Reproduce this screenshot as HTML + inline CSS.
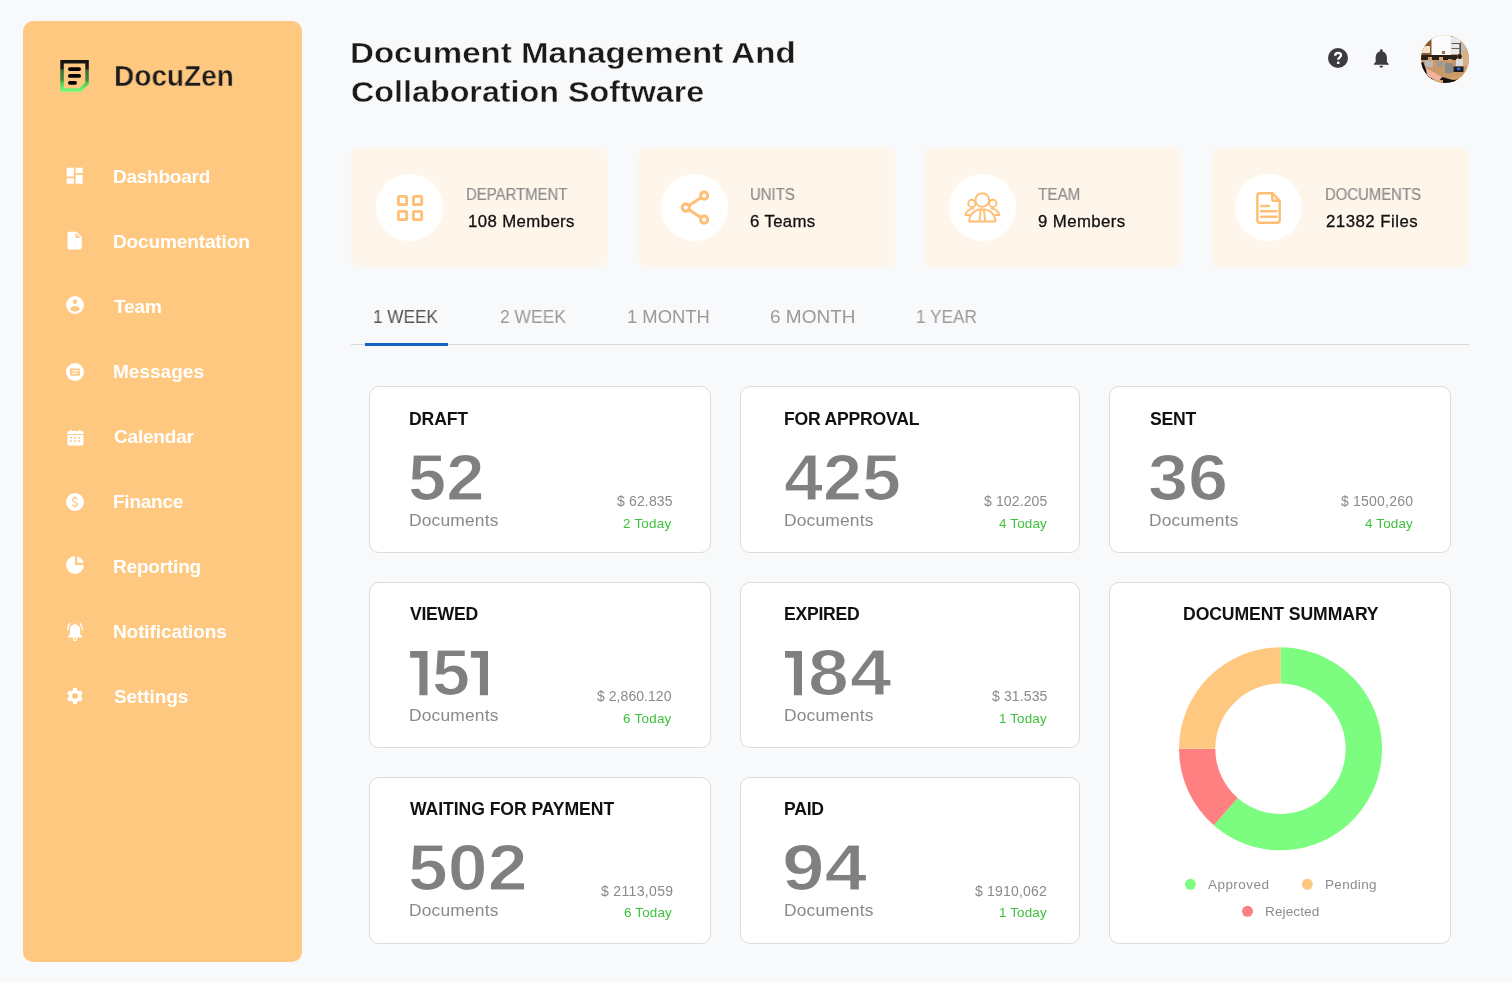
<!DOCTYPE html>
<html><head><meta charset="utf-8"><style>
*{margin:0;padding:0;box-sizing:border-box}
html,body{width:1512px;height:982px;overflow:hidden;background:#F8F9FB;font-family:"Liberation Sans",sans-serif}
.t{position:absolute;line-height:1;white-space:nowrap;will-change:transform}
.ic{position:absolute;overflow:visible;will-change:transform}
.b{position:absolute}
</style></head><body>
<div class="b" style="left:23px;top:21px;width:279px;height:941px;background:#FEC880;border-radius:10px"></div>
<div class="b" style="left:351px;top:148px;width:257px;height:119px;background:#FFF6EB;border-radius:8px"></div>
<div class="b" style="left:375.8px;top:174px;width:67px;height:67px;background:#fff;border-radius:50%"></div>
<div class="b" style="left:638px;top:148px;width:257px;height:119px;background:#FFF6EB;border-radius:8px"></div>
<div class="b" style="left:661.0px;top:174px;width:67px;height:67px;background:#fff;border-radius:50%"></div>
<div class="b" style="left:925px;top:148px;width:257px;height:119px;background:#FFF6EB;border-radius:8px"></div>
<div class="b" style="left:949.0px;top:174px;width:67px;height:67px;background:#fff;border-radius:50%"></div>
<div class="b" style="left:1212px;top:148px;width:257px;height:119px;background:#FFF6EB;border-radius:8px"></div>
<div class="b" style="left:1234.8px;top:174px;width:67px;height:67px;background:#fff;border-radius:50%"></div>
<div class="b" style="left:351px;top:344px;width:1118px;height:1px;background:#d9d9d9"></div>
<div class="b" style="left:365px;top:343px;width:83px;height:3px;background:#1565c0"></div>
<div class="b" style="left:369px;top:386px;width:342px;height:167px;background:#fff;border:1px solid #dcdcdc;border-radius:10px"></div>
<div class="b" style="left:740px;top:386px;width:340px;height:167px;background:#fff;border:1px solid #dcdcdc;border-radius:10px"></div>
<div class="b" style="left:1109px;top:386px;width:342px;height:167px;background:#fff;border:1px solid #dcdcdc;border-radius:10px"></div>
<div class="b" style="left:369px;top:582px;width:342px;height:166px;background:#fff;border:1px solid #dcdcdc;border-radius:10px"></div>
<div class="b" style="left:740px;top:582px;width:340px;height:166px;background:#fff;border:1px solid #dcdcdc;border-radius:10px"></div>
<div class="b" style="left:369px;top:777px;width:342px;height:167px;background:#fff;border:1px solid #dcdcdc;border-radius:10px"></div>
<div class="b" style="left:740px;top:777px;width:340px;height:167px;background:#fff;border:1px solid #dcdcdc;border-radius:10px"></div>
<div class="b" style="left:1109px;top:582px;width:342px;height:362px;background:#fff;border:1px solid #dcdcdc;border-radius:10px"></div>
<svg class="ic" style="left:0;top:0;width:1512px;height:982px" viewBox="0 0 1512 982"><path fill="#7DFD7F" d="M1280.50 647.30A101.5 101.5 0 1 1 1213.78 825.29L1237.64 797.93A65.2 65.2 0 1 0 1280.50 683.60z"/><path fill="#FF8080" d="M1213.78 825.29A101.5 101.5 0 0 1 1179.00 748.80L1215.30 748.80A65.2 65.2 0 0 0 1237.64 797.93z"/><path fill="#FFC880" d="M1179.00 748.80A101.5 101.5 0 0 1 1280.50 647.30L1280.50 683.60A65.2 65.2 0 0 0 1215.30 748.80z"/><circle cx="1190.4" cy="884.3" r="5.5" fill="#7DFD7F"/><circle cx="1307.3" cy="884.3" r="5.5" fill="#FFC880"/><circle cx="1247.5" cy="911.3" r="5.5" fill="#FF8080"/></svg>
<svg class="ic" style="left:59px;top:59px;width:32px;height:34px" viewBox="0 0 32 34"><defs><linearGradient id="lg" gradientUnits="userSpaceOnUse" x1="0" y1="0.9" x2="0" y2="32.7"><stop offset="0" stop-color="#111"/><stop offset=".27" stop-color="#1c1c1c"/><stop offset=".33" stop-color="#3a6e3e"/><stop offset=".64" stop-color="#3f8a42"/><stop offset=".72" stop-color="#4ccc4e"/><stop offset=".86" stop-color="#66e468"/><stop offset="1" stop-color="#7dfd7f"/></linearGradient></defs>
<path d="M3.05 2.65h25v21.6l-6.6 6.7H3.05z" fill="none" stroke="url(#lg)" stroke-width="3.5"/>
<rect x="9" y="8.2" width="13" height="3.7" rx="1.85" fill="#050505"/><rect x="9" y="15.1" width="13" height="3.7" rx="1.85" fill="#050505"/><rect x="9" y="22" width="9" height="3.7" rx="1.85" fill="#050505"/></svg>
<svg class="ic" style="left:1421px;top:35px;width:48px;height:48px" viewBox="0 0 48 48"><defs><clipPath id="av"><circle cx="24" cy="24" r="24"/></clipPath></defs><g clip-path="url(#av)">
<rect width="48" height="48" fill="#c99a68"/>
<rect x="0" y="0" width="12" height="22" fill="#8a5a30"/>
<rect x="0" y="11" width="9" height="7" fill="#f3e2cc"/>
<rect x="10.5" y="0" width="19.5" height="20" fill="#fbfbfb"/>
<rect x="29.5" y="2" width="10" height="17" fill="#e9e9e9"/>
<rect x="30.5" y="8" width="8" height="1" fill="#555"/><rect x="30.5" y="13" width="8" height="1" fill="#666"/>
<rect x="39" y="5" width="9" height="26" fill="#d6b089"/>
<rect x="40" y="10" width="4" height="6" fill="#bbb"/>
<rect x="38.5" y="8" width="1.2" height="20" fill="#222"/>
<rect x="21" y="16" width="3" height="3" fill="#a0703e"/>
<path d="M0 20h36v5H0z" fill="#2a2018"/>
<circle cx="38.5" cy="21.5" r="2.3" fill="#1f1a18"/>
<rect x="35" y="24" width="7" height="7" fill="#dcdcdc"/>
<rect x="4" y="25" width="8" height="7" fill="#b8b8b8"/>
<rect x="16" y="26" width="6" height="6" fill="#9a9a9a"/>
<rect x="24" y="28" width="8" height="10" fill="#8a8a8a"/>
<rect x="7" y="22" width="4" height="4" fill="#d9a070"/><rect x="18" y="22" width="4" height="4" fill="#e0a878"/><rect x="27" y="24" width="4" height="4" fill="#d59b6a"/>
<path d="M0 27 Q8 36 22 44 L48 38 V48 H0z" fill="#cf9f6c"/>
<path d="M1 27.5 Q4 37 8 42 Q14 44 22 43.5 Q30 46 38 48" stroke="#141010" stroke-width="2.6" fill="none"/>
<path d="M0 30 L0 48 L8 48 Q3 40 1 30z" fill="#141010"/>
<path d="M5 33 Q12 37 21 42 L18 46 Q10 44 6 40z" fill="#f0b49c"/>
<path d="M22 44 Q30 46 40 44 L42 48 L22 48z" fill="#161210"/>
<rect x="32.5" y="31.5" width="10" height="5.5" fill="#1e1e22"/>
<rect x="36" y="32.5" width="3.3" height="2.6" fill="#2f6fd8"/>
</g></svg>
<svg class="ic" style="left:0;top:0;width:1512px;height:982px" viewBox="0 0 1512 982"><path fill="#808080" d="M410.1 651.1H427.5V695.2H419.4V657.8000000000001H410.1z"/></svg>
<svg class="ic" style="left:0;top:0;width:1512px;height:982px" viewBox="0 0 1512 982"><path fill="#808080" d="M470.9 651.1H488.0V695.2H479.9V657.8000000000001H470.9z"/></svg>
<svg class="ic" style="left:0;top:0;width:1512px;height:982px" viewBox="0 0 1512 982"><path fill="#808080" d="M785.0 651.1H802.0V695.2H793.9V657.8000000000001H785.0z"/></svg>
<svg class="ic" style="left:64.3px;top:165.3px;width:21.336px;height:21.336px;" viewBox="0 0 24 24"><path fill="#ffffff" d="M3 13h8V3H3v10zm0 8h8v-6H3v6zm10 0h8V11h-8v10zm0-18v6h8V3h-8z"/></svg>
<svg class="ic" style="left:64.3px;top:230.3px;width:21.336px;height:21.336px;" viewBox="0 0 24 24"><path fill="#ffffff" d="M6 2c-1.1 0-1.99.9-1.99 2L4 20c0 1.1.89 2 1.99 2H18c1.1 0 2-.9 2-2V8l-6-6H6zm7 7V3.5L18.5 9H13z"/></svg>
<svg class="ic" style="left:65px;top:295px;width:20px;height:20px;" viewBox="1 1 18 18"><path fill="#ffffff" fill-rule="evenodd" d="M18 10a8 8 0 11-16 0 8 8 0 0116 0zm-6-3a2 2 0 11-4 0 2 2 0 014 0zm-2 4a5 5 0 00-4.546 2.916A5.986 5.986 0 0010 16a5.986 5.986 0 004.546-2.084A5 5 0 0010 11z"/></svg>
<svg class="ic" style="left:66px;top:363px;width:18px;height:18px;" viewBox="0 0 18 18"><circle cx="9" cy="9" r="9" fill="#ffffff"/><path d="M3.6 5.4h10.2v6.4c0 .6-.4 1-1 1H5.3c-.6 0-1-.4-1-1z" fill="#FEC880"/><rect x="6" y="7" width="7" height="1" fill="#ffffff" opacity=".8"/><rect x="6" y="8.6" width="6" height="1" fill="#ffffff" opacity=".6"/><rect x="6" y="10.2" width="5" height="1" fill="#ffffff" opacity=".8"/></svg>
<svg class="ic" style="left:66.5px;top:428.5px;width:17px;height:17px;" viewBox="0 0 17 17"><rect x="0.5" y="2" width="16" height="14.5" rx="1.6" fill="#ffffff"/><rect x="3.5" y="0.5" width="1.6" height="3" rx=".6" fill="#ffffff"/><rect x="11.9" y="0.5" width="1.6" height="3" rx=".6" fill="#ffffff"/><rect x="0.5" y="5" width="16" height="0.9" fill="#FEC880"/><rect x="3.0" y="8.0" width="1.9" height="1.6" fill="#FEC880"/><rect x="3.0" y="11.2" width="1.9" height="1.6" fill="#FEC880"/><rect x="7.1" y="8.0" width="1.9" height="1.6" fill="#FEC880"/><rect x="7.1" y="11.2" width="1.9" height="1.6" fill="#FEC880"/><rect x="11.2" y="8.0" width="1.9" height="1.6" fill="#FEC880"/><rect x="11.2" y="11.2" width="1.9" height="1.6" fill="#FEC880"/></svg>
<svg class="ic" style="left:66px;top:493px;width:18px;height:18px;" viewBox="0 0 18 18"><circle cx="9" cy="9" r="9" fill="#ffffff"/><path d="M11.1 6.3C10.6 5.4 9.8 5 8.9 5 7.5 5 6.6 5.8 6.6 6.9c0 2.3 4.7 1.5 4.7 4.1 0 1.2-1 2-2.4 2-1.2 0-2.1-.6-2.5-1.5M8.9 3.2v1.8M8.9 13v1.8" fill="none" stroke="#FEC880" stroke-width="1.35"/></svg>
<svg class="ic" style="left:65px;top:555px;width:20px;height:20px;" viewBox="1 1 18 18"><path fill="#ffffff" d="M2 10a8 8 0 018-8v8h8a8 8 0 11-16 0z"/><path fill="#ffffff" d="M12 2.252A8.014 8.014 0 0117.748 8H12V2.252z"/></svg>
<svg class="ic" style="left:66px;top:622px;width:18px;height:20px;" viewBox="0 0 18 20"><path fill="#ffffff" d="M9 1.7c.6 0 1 .4 1 .9 2.6.5 4.2 2.6 4.2 5.4v4.3l1.8 2.2v.9H2v-.9l1.8-2.2V8c0-2.8 1.6-4.9 4.2-5.4 0-.5.4-.9 1-.9z"/><circle cx="9" cy="17.2" r="1.55" fill="none" stroke="#ffffff" stroke-width="1.2"/><path d="M1.7 7.6C1.8 5 2.6 3 3.9 1.5M16.3 7.6C16.2 5 15.4 3 14.1 1.5" stroke="#ffffff" stroke-width="1.35" fill="none" stroke-linecap="round"/></svg>
<svg class="ic" style="left:65px;top:686px;width:20px;height:20px;" viewBox="0 0 24 24"><path fill="#ffffff" fill-rule="evenodd" d="M19.14 12.94c.04-.3.06-.61.06-.94 0-.32-.02-.64-.07-.94l2.03-1.58a.49.49 0 00.12-.61l-1.92-3.32a.488.488 0 00-.59-.22l-2.39.96c-.5-.38-1.03-.7-1.62-.94l-.36-2.54a.484.484 0 00-.48-.41h-3.84c-.24 0-.43.17-.47.41l-.36 2.54c-.59.24-1.13.57-1.62.94l-2.39-.96c-.22-.08-.47 0-.59.22L2.74 8.87c-.12.21-.08.47.12.61l2.03 1.58c-.05.3-.09.63-.09.94s.02.64.07.94l-2.03 1.58a.49.49 0 00-.12.61l1.92 3.32c.12.22.37.29.59.22l2.39-.96c.5.38 1.03.7 1.62.94l.36 2.54c.05.24.24.41.48.41h3.84c.24 0 .44-.17.47-.41l.36-2.54c.59-.24 1.13-.56 1.62-.94l2.39.96c.22.08.47 0 .59-.22l1.92-3.32c.12-.22.07-.47-.12-.61l-2.01-1.58zM12 15.6c-1.98 0-3.6-1.62-3.6-3.6s1.62-3.6 3.6-3.6 3.6 1.62 3.6 3.6-1.62 3.6-3.6 3.6z"/></svg>
<svg class="ic" style="left:1328px;top:48px;width:20px;height:20px;" viewBox="2 2 20 20"><circle cx="12" cy="12" r="10" fill="#3b3b40"/><path d="M9.15 9.7C9.15 7.8 10.4 6.95 12.1 6.95 13.8 6.95 15 7.9 15 9.3c0 2-2.75 2.1-2.75 4.4" fill="none" stroke="#fff" stroke-width="2.3"/><rect x="10.95" y="15.6" width="2.6" height="2.5" rx=".9" fill="#fff"/></svg>
<svg class="ic" style="left:1370.2px;top:46.6px;width:22.56px;height:22.56px;" viewBox="0 0 24 24"><path fill="#3b3b40" d="M12 22c1.1 0 2-.9 2-2h-4c0 1.1.89 2 2 2zm6-6v-5c0-3.07-1.64-5.64-4.5-6.32V4c0-.83-.67-1.5-1.5-1.5s-1.5.67-1.5 1.5v.68C7.63 5.36 6 7.92 6 11v5l-2 2v1h16v-1l-2-2z"/></svg>
<svg class="ic" style="left:396px;top:194px;width:28px;height:28px;" viewBox="0 0 28 28"><rect x="2.4" y="2.4" width="8.3" height="8.3" rx="1.3" fill="none" stroke="#FEBF75" stroke-width="2.8"/><rect x="2.4" y="17.4" width="8.3" height="8.3" rx="1.3" fill="none" stroke="#FEBF75" stroke-width="2.8"/><rect x="17.4" y="2.4" width="8.3" height="8.3" rx="1.3" fill="none" stroke="#FEBF75" stroke-width="2.8"/><rect x="17.4" y="17.4" width="8.3" height="8.3" rx="1.3" fill="none" stroke="#FEBF75" stroke-width="2.8"/></svg>
<svg class="ic" style="left:680px;top:190px;width:30px;height:35px;" viewBox="680 190 30 35"><g fill="none" stroke="#FEBF75" stroke-width="3.0"><circle cx="704.1" cy="195.7" r="3.6"/><circle cx="685.8" cy="207.6" r="3.6"/><circle cx="704.1" cy="219.7" r="3.6"/><path d="M689 205.5l11.9-7.7M689 209.7l11.9 7.8"/></g></svg>
<svg class="ic" style="left:962px;top:190px;width:40px;height:35px;" viewBox="962 190 40 35"><g fill="none" stroke="#FEBF75" stroke-width="1.9" stroke-linejoin="round"><circle cx="982.3" cy="200" r="6.8"/><circle cx="971.8" cy="203.4" r="3.6"/><circle cx="992.9" cy="203.4" r="3.6"/><path d="M969.2 221.5c0-7 5.5-12.3 13.1-12.3s13.1 5.3 13.1 12.3z"/><path d="M974.2 208.3c-4.5.3-8.6 3.1-9 6.7h4.8M990.4 208.3c4.5.3 8.6 3.1 9 6.7h-4.8"/><path d="M980.8 209.6l-1.5 11.9M983.8 209.6l1.5 11.9"/></g></svg>
<svg class="ic" style="left:1254px;top:190px;width:30px;height:36px;" viewBox="1254 190 30 36"><g fill="none" stroke="#FEBF75" stroke-width="2.5" stroke-linecap="round" stroke-linejoin="round"><path d="M1272.3 193.2h-12.4c-1.4 0-2.5 1.1-2.5 2.5v24.6c0 1.4 1.1 2.5 2.5 2.5h17.3c1.4 0 2.5-1.1 2.5-2.5V200.8z"/><path d="M1272.3 193.5v5.9c0 .8.6 1.4 1.4 1.4h5.6"/><path d="M1261.3 205.9h7.6M1261.3 211.3h15M1261.3 216.7h15"/></g></svg>
<div class="t" style="left:113.91px;top:62.00px;font-size:29.0px;color:#1b1b1b;font-weight:700;transform:scaleX(0.9656);transform-origin:0 0;-webkit-text-stroke:0.45px #FEC880;">DocuZen</div>
<div class="t" style="left:113.03px;top:167.00px;font-size:19px;color:#ffffff;font-weight:700;letter-spacing:-0.249px;">Dashboard</div>
<div class="t" style="left:113.03px;top:232.00px;font-size:19px;color:#ffffff;font-weight:700;letter-spacing:-0.123px;">Documentation</div>
<div class="t" style="left:114.06px;top:297.00px;font-size:19px;color:#ffffff;font-weight:700;letter-spacing:-0.079px;">Team</div>
<div class="t" style="left:113.03px;top:362.00px;font-size:19px;color:#ffffff;font-weight:700;letter-spacing:0.024px;">Messages</div>
<div class="t" style="left:113.73px;top:427.00px;font-size:19px;color:#ffffff;font-weight:700;letter-spacing:-0.197px;">Calendar</div>
<div class="t" style="left:113.03px;top:492.00px;font-size:19px;color:#ffffff;font-weight:700;letter-spacing:-0.253px;">Finance</div>
<div class="t" style="left:113.03px;top:557.00px;font-size:19px;color:#ffffff;font-weight:700;letter-spacing:-0.189px;">Reporting</div>
<div class="t" style="left:113.03px;top:622.00px;font-size:19px;color:#ffffff;font-weight:700;letter-spacing:-0.099px;">Notifications</div>
<div class="t" style="left:113.70px;top:687.00px;font-size:19px;color:#ffffff;font-weight:700;letter-spacing:-0.103px;">Settings</div>
<div class="t" style="left:349.82px;top:37.00px;font-size:30.4px;color:#1a1a1a;font-weight:700;transform:scaleX(1.0891);transform-origin:0 0;-webkit-text-stroke:0.4px #F8F9FB;">Document Management And</div>
<div class="t" style="left:351.17px;top:76.00px;font-size:30.4px;color:#1a1a1a;font-weight:700;transform:scaleX(1.0621);transform-origin:0 0;-webkit-text-stroke:0.4px #F8F9FB;">Collaboration Software</div>
<div class="t" style="left:466.44px;top:187.00px;font-size:16.0px;color:#8c8c8c;transform:scaleX(0.9316);transform-origin:0 0;-webkit-text-stroke:0.2px #8c8c8c;">DEPARTMENT</div>
<div class="t" style="left:467.63px;top:214.00px;font-size:16.8px;color:#121212;letter-spacing:0.389px;-webkit-text-stroke:0.3px #121212;">108 Members</div>
<div class="t" style="left:749.70px;top:187.00px;font-size:16.0px;color:#8c8c8c;transform:scaleX(0.9346);transform-origin:0 0;-webkit-text-stroke:0.2px #8c8c8c;">UNITS</div>
<div class="t" style="left:749.77px;top:214.00px;font-size:16.8px;color:#121212;letter-spacing:0.358px;-webkit-text-stroke:0.3px #121212;">6 Teams</div>
<div class="t" style="left:1037.91px;top:187.00px;font-size:16.0px;color:#8c8c8c;transform:scaleX(0.9540);transform-origin:0 0;-webkit-text-stroke:0.2px #8c8c8c;">TEAM</div>
<div class="t" style="left:1037.73px;top:214.00px;font-size:16.8px;color:#121212;letter-spacing:0.413px;-webkit-text-stroke:0.3px #121212;">9 Members</div>
<div class="t" style="left:1325.24px;top:187.00px;font-size:16.0px;color:#8c8c8c;transform:scaleX(0.9303);transform-origin:0 0;-webkit-text-stroke:0.2px #8c8c8c;">DOCUMENTS</div>
<div class="t" style="left:1326.00px;top:214.00px;font-size:16.8px;color:#121212;letter-spacing:0.492px;-webkit-text-stroke:0.3px #121212;">21382 Files</div>
<div class="t" style="left:373.25px;top:308.00px;font-size:18.4px;color:#555555;transform:scaleX(0.9336);transform-origin:0 0;">1 WEEK</div>
<div class="t" style="left:499.99px;top:308.00px;font-size:18.4px;color:#9a9a9a;transform:scaleX(0.9489);transform-origin:0 0;">2 WEEK</div>
<div class="t" style="left:627.15px;top:308.00px;font-size:18.4px;color:#9a9a9a;transform:scaleX(0.9995);transform-origin:0 0;">1 MONTH</div>
<div class="t" style="left:770.08px;top:308.00px;font-size:18.4px;color:#9a9a9a;transform:scaleX(1.0337);transform-origin:0 0;">6 MONTH</div>
<div class="t" style="left:916.14px;top:308.00px;font-size:18.4px;color:#9a9a9a;transform:scaleX(0.9367);transform-origin:0 0;">1 YEAR</div>
<div class="t" style="left:409.08px;top:411.00px;font-size:17.6px;color:#111111;font-weight:700;letter-spacing:-0.135px;">DRAFT</div>
<div class="t" style="left:408.02px;top:446.00px;font-size:64px;color:#808080;font-weight:700;transform:scaleX(1.0753);transform-origin:0 0;-webkit-text-stroke:1.2px #ffffff;">52</div>
<div class="t" style="left:409.43px;top:512.00px;font-size:17.4px;color:#8a8a8a;letter-spacing:0.172px;">Documents</div>
<div class="t" style="left:616.70px;top:494.00px;font-size:14px;color:#8a8a8a;letter-spacing:0.151px;">$ 62.835</div>
<div class="t" style="left:623.41px;top:517.00px;font-size:13.4px;color:#3cc13c;letter-spacing:0.237px;">2 Today</div>
<div class="t" style="left:784.06px;top:411.00px;font-size:17.6px;color:#111111;font-weight:700;letter-spacing:-0.217px;">FOR APPROVAL</div>
<div class="t" style="left:784.41px;top:446.00px;font-size:64px;color:#808080;font-weight:700;transform:scaleX(1.0962);transform-origin:0 0;-webkit-text-stroke:1.2px #ffffff;">425</div>
<div class="t" style="left:783.93px;top:512.00px;font-size:17.4px;color:#8a8a8a;letter-spacing:0.172px;">Documents</div>
<div class="t" style="left:983.87px;top:494.00px;font-size:14px;color:#8a8a8a;letter-spacing:0.124px;">$ 102.205</div>
<div class="t" style="left:998.64px;top:517.00px;font-size:13.4px;color:#3cc13c;letter-spacing:0.181px;">4 Today</div>
<div class="t" style="left:1149.73px;top:411.00px;font-size:17.6px;color:#111111;font-weight:700;letter-spacing:-0.25px;">SENT</div>
<div class="t" style="left:1147.90px;top:446.00px;font-size:64px;color:#808080;font-weight:700;transform:scaleX(1.1269);transform-origin:0 0;-webkit-text-stroke:1.2px #ffffff;">36</div>
<div class="t" style="left:1149.43px;top:512.00px;font-size:17.4px;color:#8a8a8a;letter-spacing:0.172px;">Documents</div>
<div class="t" style="left:1341.08px;top:494.00px;font-size:14px;color:#8a8a8a;letter-spacing:0.209px;">$ 1500,260</div>
<div class="t" style="left:1364.84px;top:517.00px;font-size:13.4px;color:#3cc13c;letter-spacing:0.181px;">4 Today</div>
<div class="t" style="left:409.73px;top:606.00px;font-size:17.6px;color:#111111;font-weight:700;letter-spacing:-0.25px;">VIEWED</div>
<div class="t" style="left:432.38px;top:641.00px;font-size:64px;color:#808080;font-weight:700;transform:scaleX(1.0700);transform-origin:0 0;-webkit-text-stroke:1.2px #ffffff;">5</div>
<div class="t" style="left:408.63px;top:707.00px;font-size:17.4px;color:#8a8a8a;letter-spacing:0.172px;">Documents</div>
<div class="t" style="left:596.98px;top:689.00px;font-size:14px;color:#8a8a8a;letter-spacing:0.048px;">$ 2,860.120</div>
<div class="t" style="left:622.79px;top:712.00px;font-size:13.4px;color:#3cc13c;letter-spacing:0.274px;">6 Today</div>
<div class="t" style="left:784.06px;top:606.00px;font-size:17.6px;color:#111111;font-weight:700;letter-spacing:-0.25px;">EXPIRED</div>
<div class="t" style="left:808.31px;top:641.00px;font-size:64px;color:#808080;font-weight:700;transform:scaleX(1.1468);transform-origin:0 0;-webkit-text-stroke:1.2px #ffffff;">8</div>
<div class="t" style="left:849.97px;top:641.00px;font-size:64px;color:#808080;font-weight:700;transform:scaleX(1.1668);transform-origin:0 0;-webkit-text-stroke:1.2px #ffffff;">4</div>
<div class="t" style="left:783.93px;top:707.00px;font-size:17.4px;color:#8a8a8a;letter-spacing:0.172px;">Documents</div>
<div class="t" style="left:991.70px;top:689.00px;font-size:14px;color:#8a8a8a;letter-spacing:0.127px;">$ 31.535</div>
<div class="t" style="left:998.79px;top:712.00px;font-size:13.4px;color:#3cc13c;letter-spacing:0.156px;">1 Today</div>
<div class="t" style="left:410.27px;top:801.00px;font-size:17.6px;color:#111111;font-weight:700;letter-spacing:-0.060px;">WAITING FOR PAYMENT</div>
<div class="t" style="left:408.01px;top:836.00px;font-size:64px;color:#808080;font-weight:700;transform:scaleX(1.1196);transform-origin:0 0;-webkit-text-stroke:1.2px #ffffff;">502</div>
<div class="t" style="left:409.13px;top:902.00px;font-size:17.4px;color:#8a8a8a;letter-spacing:0.172px;">Documents</div>
<div class="t" style="left:600.53px;top:884.00px;font-size:14px;color:#8a8a8a;letter-spacing:0.339px;">$ 2113,059</div>
<div class="t" style="left:623.89px;top:906.00px;font-size:13.4px;color:#3cc13c;letter-spacing:0.190px;">6 Today</div>
<div class="t" style="left:784.06px;top:801.00px;font-size:17.6px;color:#111111;font-weight:700;letter-spacing:-0.25px;">PAID</div>
<div class="t" style="left:782.01px;top:836.00px;font-size:64px;color:#808080;font-weight:700;transform:scaleX(1.1957);transform-origin:0 0;-webkit-text-stroke:1.2px #ffffff;">94</div>
<div class="t" style="left:783.93px;top:902.00px;font-size:17.4px;color:#8a8a8a;letter-spacing:0.172px;">Documents</div>
<div class="t" style="left:975.18px;top:884.00px;font-size:14px;color:#8a8a8a;letter-spacing:0.188px;">$ 1910,062</div>
<div class="t" style="left:998.79px;top:906.00px;font-size:13.4px;color:#3cc13c;letter-spacing:0.156px;">1 Today</div>
<div class="t" style="left:1182.86px;top:606.00px;font-size:17.6px;color:#111111;font-weight:700;letter-spacing:-0.078px;">DOCUMENT SUMMARY</div>
<div class="t" style="left:1208.20px;top:878.00px;font-size:13.5px;color:#8c8c8c;letter-spacing:0.442px;">Approved</div>
<div class="t" style="left:1324.77px;top:878.00px;font-size:13.5px;color:#8c8c8c;letter-spacing:0.328px;">Pending</div>
<div class="t" style="left:1264.77px;top:905.00px;font-size:13.5px;color:#8c8c8c;letter-spacing:0.127px;">Rejected</div>
</body></html>
